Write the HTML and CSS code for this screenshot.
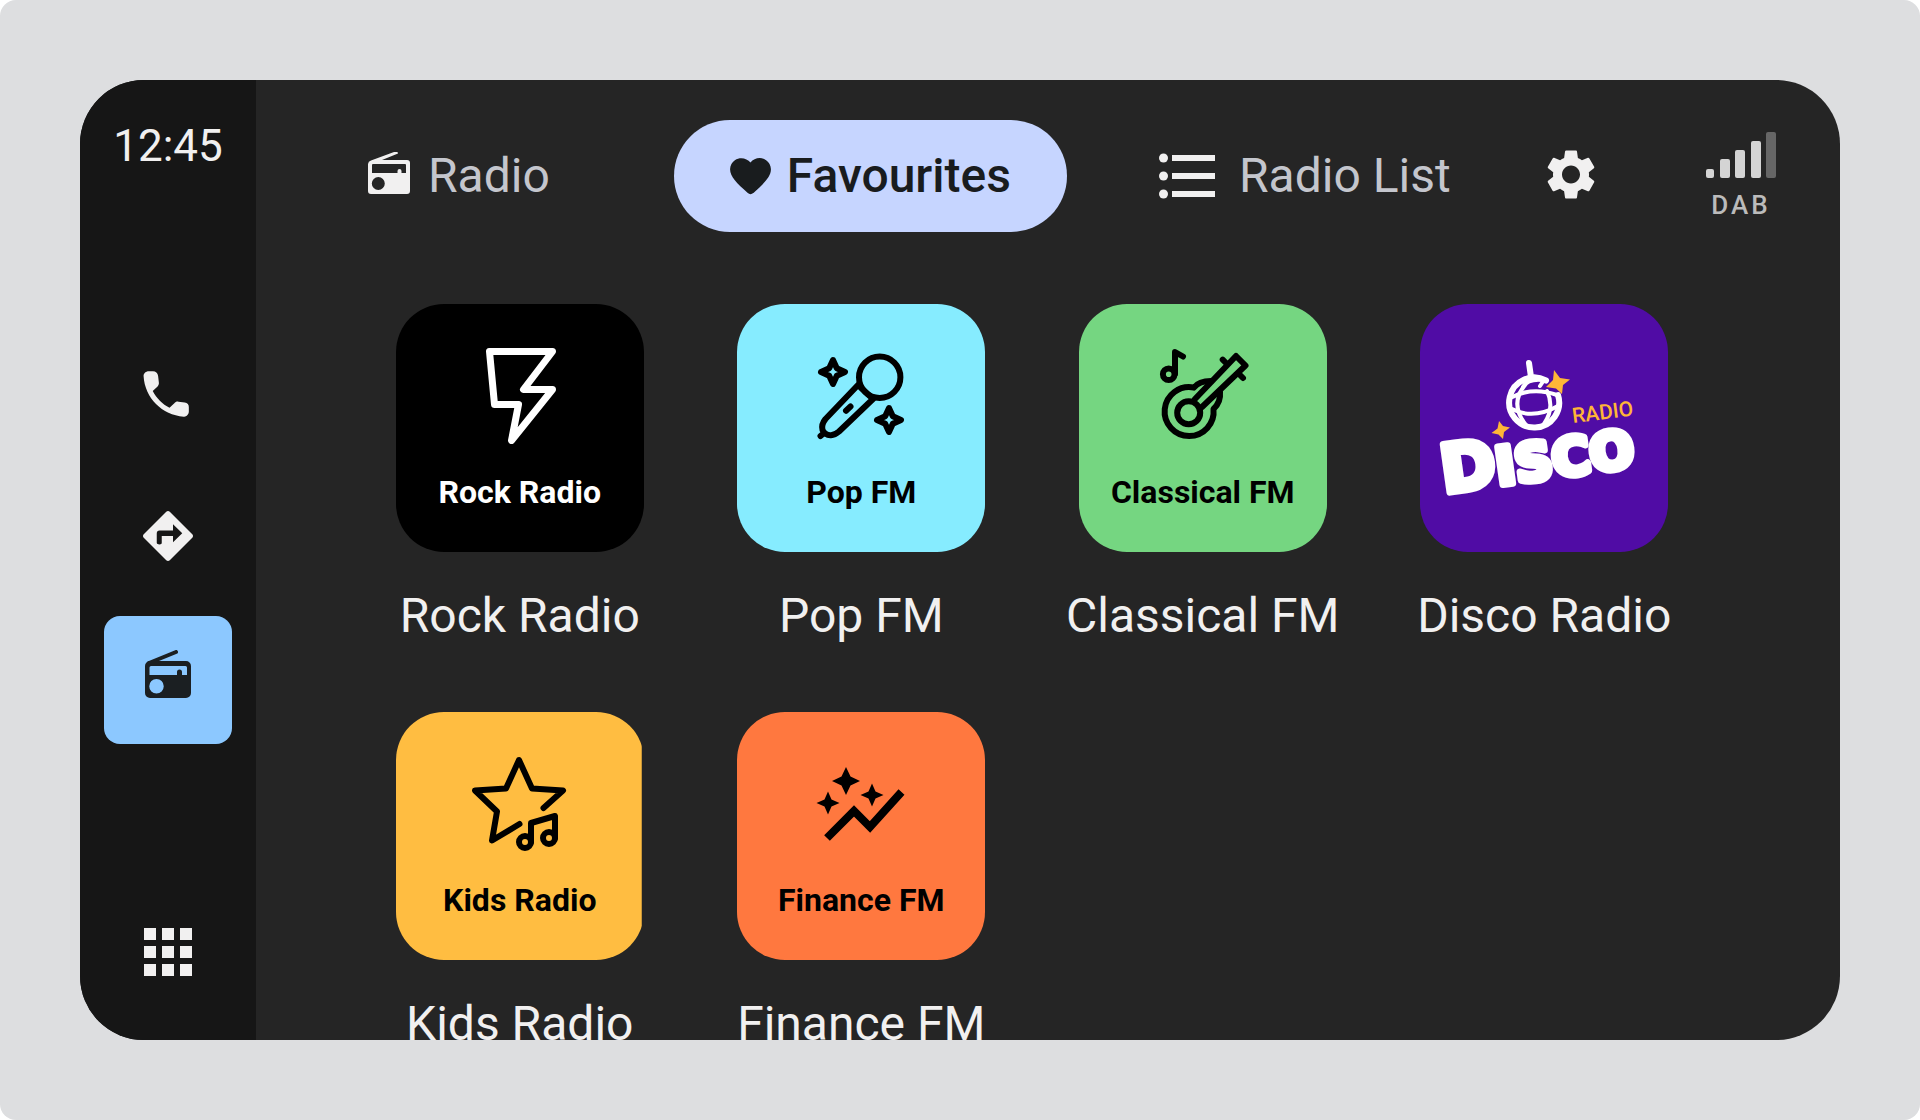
FILE: index.html
```html
<!DOCTYPE html>
<html lang="en">
<head>
  <meta charset="UTF-8" />
  <meta name="viewport" content="width=device-width, initial-scale=1.0"/>
  <title>Car Radio</title>
  <link rel="stylesheet" href="styles.css">
</head>
<body>

  <div class="screen">

    <aside class="sidebar">
      <time class="clock">12:45</time>
      <nav class="apps">
        <button class="app" aria-label="Phone">
          <svg width="61" height="61" viewBox="0.8 -0.6 24 24" fill="currentColor"><path d="M19.2 15.3l-2.5-.3c-.6-.1-1.2.1-1.6.6l-1.9 1.8c-2.8-1.4-5.1-3.7-6.6-6.6l1.9-1.8c.4-.4.6-1 .5-1.6L8.7 4.8C8.600 3.800 7.700 3 6.700 3H5C3.900 3 2.900 3.900 3 5c.5 8.500 7.300 15.300 15.800 15.900 1.100.1 2-.9 2-2v-1.700c.1-1-.6-1.800-1.600-1.900z"/></svg>
        </button>
        <button class="app" aria-label="Navigation">
          <svg width="60" height="60" viewBox="0 0 24 24" fill="currentColor"><path d="M21.710 11.290l-9-9c-.39-.39-1.020-.39-1.410 0l-9 9c-.39.39-.39 1.020 0 1.410l9 9c.39.39 1.020.39 1.410 0l9-9c.39-.38.39-1.010 0-1.410zM14 14.500V12H9.500v2.700c0 .41-.3.700-.9.700-.6 0-1.100-.3-1.100-.700V11c0-.7.4-1.200 1.100-1.200H14V7.300l3.700 3.600-3.700 3.600z"/></svg>
        </button>
        <button class="app app-active" aria-label="Radio">
          <svg width="46" height="60" viewBox="0 0 46 60">
            <path d="M4 13L31 2" stroke="currentColor" stroke-width="4" stroke-linecap="round"/>
            <path fill="currentColor" fill-rule="evenodd" d="M5 11H41a5 5 0 0 1 5 5V43a5 5 0 0 1-5 5H5a5 5 0 0 1-5-5V16a5 5 0 0 1 5-5zM6 16a1.500 1.500 0 0 0-1.500 1.500V25H32V22a2.500 2.500 0 0 1 5 0V25H42V17.500A1.500 1.500 0 0 0 40.500 16zM11.500 29a7 7 0 1 0 0 14.500a7 7 0 1 0 0-14.500z"/>
          </svg>
        </button>
      </nav>
      <button class="app app-grid" aria-label="All apps">
        <svg width="48" height="48" viewBox="0 0 48 48" fill="currentColor"><path d="M0 0h12v12H0zM18 0h12v12H18zM36 0h12v12H36zM0 18h12v12H0zM18 18h12v12H18zM36 18h12v12H36zM0 36h12v12H0zM18 36h12v12H18zM36 36h12v12H36z"/></svg>
      </button>
    </aside>

    <main class="content">
      <header class="topbar">
        <nav class="tabs">
          <button class="tab tab-radio">
            <svg width="42" height="48" viewBox="0 0 42 48" fill="currentColor"><path fill-rule="evenodd" d="M3 8.500L26 0H29.500L30 1.500 14 8H39a3 3 0 0 1 3 3V39a3 3 0 0 1-3 3H3a3 3 0 0 1-3-3V12a4 4 0 0 1 3-3.500zM5 12a1 1 0 0 0-1 1V21H29.500V19a2 2 0 0 1 4 0V21H38V13a1 1 0 0 0-1-1zM10.300 25a6.500 6.500 0 1 0 0 13a6.500 6.500 0 1 0 0-13z"/></svg>
            <span>Radio</span>
          </button>
          <button class="tab tab-active">
            <svg width="49" height="49" viewBox="0 0 24 24" fill="currentColor"><path d="M13.350 20.130c-.76.690-1.930.690-2.690-.01l-.11-.1C5.300 15.270 1.870 12.160 2 8.280c.06-1.700.93-3.330 2.340-4.290 2.640-1.800 5.900-.96 7.660 1.100 1.760-2.060 5.020-2.910 7.660-1.100 1.410.96 2.280 2.590 2.340 4.290.14 3.880-3.300 6.990-8.550 11.760l-.1.090z"/></svg>
            <span>Favourites</span>
          </button>
          <button class="tab tab-list">
            <svg width="56" height="46" viewBox="0 0 56 46" fill="currentColor">
              <circle cx="4.500" cy="5" r="4.500"/><circle cx="4.500" cy="23" r="4.500"/><circle cx="4.500" cy="41" r="4.500"/>
              <path d="M13 2h43v6H13zM13 20h43v6H13zM13 38h43v6H13z"/>
            </svg>
            <span>Radio List</span>
          </button>
        </nav>
        <button class="settings" aria-label="Settings">
          <svg width="60" height="60" viewBox="0 0.6 24 24" fill="currentColor"><path d="M19.140 12.940c.04-.3.06-.61.06-.94 0-.32-.02-.64-.07-.94l2.030-1.580c.18-.14.23-.41.12-.61l-1.920-3.320c-.12-.22-.37-.29-.59-.22l-2.390.96c-.5-.38-1.030-.7-1.620-.94l-.36-2.540c-.04-.24-.24-.41-.48-.41h-3.840c-.24 0-.43.17-.47.41l-.36 2.540c-.59.24-1.130.57-1.620.94l-2.390-.96c-.22-.08-.47 0-.59.22L2.740 8.870c-.12.21-.08.47.12.61l2.030 1.580c-.05.3-.09.63-.09.94s.02.64.07.94l-2.030 1.580c-.18.14-.23.41-.12.610l1.920 3.320c.12.22.37.29.59.22l2.390-.96c.5.38 1.030.7 1.620.94l.36 2.540c.05.24.24.41.48.41h3.840c.24 0 .44-.17.47-.41l.36-2.540c.59-.24 1.130-.56 1.620-.94l2.390.96c.22.08.47 0 .59-.22l1.920-3.320c.12-.22.07-.47-.12-.61l-2.010-1.580zM12 15.600c-1.980 0-3.600-1.620-3.600-3.600s1.620-3.600 3.600-3.600 3.600 1.620 3.600 3.600-1.620 3.600-3.600 3.600z"/></svg>
        </button>
        <div class="signal">
          <svg width="70" height="46" viewBox="0 0 70 46" fill="currentColor">
            <rect y="37" width="8" height="9" rx="2"/>
            <rect x="14" y="27" width="10" height="19" rx="2"/>
            <rect x="29" y="18" width="10" height="28" rx="2"/>
            <rect x="45" y="9" width="10" height="37" rx="2"/>
            <rect class="bar-off" x="60" y="0" width="10" height="46" rx="2"/>
          </svg>
          <span>DAB</span>
        </div>
      </header>

      <section class="stations">
        <button class="station">
          <span class="tile rock">
            <svg class="tile-icon" viewBox="0 0 96 96">
              <path d="M17.500 3.500H80.500L51.500 41.500H80.500L39.500 92.500 46.500 56.500H22.500z"/>
            </svg>
            <span>Rock Radio</span>
          </span>
          <span class="name">Rock Radio</span>
        </button>

        <button class="station">
          <span class="tile pop">
            <svg class="tile-icon" viewBox="0 0 96 96">
              <circle cx="66.700" cy="29.300" r="20.700"/>
              <path d="M45 37L12.500 71Q8 76.500 9.500 82 12 87.500 18 87.200 22 87 26 83.500L60 51zM11 85L7.500 88M33 62.700L37.500 58.500"/>
              <path d="M20 12L23.800 20.200 32 24 23.800 27.800 20 36 16.200 27.800 8 24 16.200 20.200z"/>
              <path d="M76 60L79.800 68.200 88 72 79.800 75.800 76 84 72.200 75.800 64 72 72.200 68.200z"/>
            </svg>
            <span>Pop FM</span>
          </span>
          <span class="name">Pop FM</span>
        </button>

        <button class="station">
          <span class="tile classical">
            <svg class="tile-icon" viewBox="0 0 96 96">
              <circle cx="13.700" cy="26.300" r="5.800"/>
              <path d="M20 26V4L28 8.500"/>
              <path d="M39 39.500A24.500 24.500 0 1 0 58.500 61Q66 54 65 44M39 39.500Q44 33 56 33"/>
              <circle cx="33.700" cy="64.700" r="11.500"/>
              <path d="M40 51L81 8 90.500 17.500 47 59M67.700 11.700L72 16M84 26L88 30"/>
            </svg>
            <span>Classical FM</span>
          </span>
          <span class="name">Classical FM</span>
        </button>

        <button class="station">
          <span class="tile disco">
            <svg class="disco-logo" viewBox="0 0 248 248">
              <g class="disco-ball">
                <path d="M109 59L111 73" stroke-width="6"/>
                <path d="M126 76.500A25 25 0 1 0 138 91" stroke-width="6"/>
                <path d="M90 94Q112 82 137 91M92 105Q113 116 138 102"/>
                <path d="M112 74Q86 96 106 121M127 87Q135 104 124 120M103 83Q108 74 124 76L120 82"/>
              </g>
              <g class="disco-star">
                <path d="M134 66L140 74 150 75.500 143 81 142 90 136 84.500 126 83 133 76z"/>
                <path d="M79 117L83 122 90 123.500 84 128 83 135 78.500 130.500 71.500 129 77.500 124.500z"/>
              </g>
              <text class="disco-word" x="24" y="189" transform="rotate(-8 24 189)"><tspan class="disco-cap">D</tspan>ISCO</text>
              <text class="disco-sub" x="153" y="119" transform="rotate(-7 153 119)">RADIO</text>
            </svg>
          </span>
          <span class="name">Disco Radio</span>
        </button>

        <button class="station">
          <span class="tile kids">
            <svg class="tile-icon" viewBox="0 0 96 96">
              <path d="M71.500 52L91 34.500 60 32.500 47 4 34 32.500 3 34.500 25 55.500 20 84.500 47.500 68"/>
              <circle cx="53" cy="86" r="6"/>
              <circle cx="77" cy="82" r="6"/>
              <path d="M59 86V67L83 60V82"/>
            </svg>
            <span>Kids Radio</span>
          </span>
          <span class="name">Kids Radio</span>
        </button>

        <button class="station">
          <span class="tile finance">
            <svg class="tile-icon" viewBox="0 0 96 96">
              <path class="chart-line" d="M14 82L41 55 57 71 88.500 36"/>
              <path class="chart-star" d="M33 11L37.500 20.500 47 25 37.500 29.500 33 39 28.500 29.500 19 25 28.500 20.500z"/>
              <path class="chart-star" d="M59 27.500L62.500 35.500 70.500 39 62.500 42.500 59 50.500 55.500 42.500 47.500 39 55.500 35.500z"/>
              <path class="chart-star" d="M15 35.500L18.500 43.500 26.500 47 18.500 50.500 15 58.500 11.500 50.500 3.500 47 11.500 43.500z"/>
            </svg>
            <span>Finance FM</span>
          </span>
          <span class="name">Finance FM</span>
        </button>
      </section>
    </main>

  </div>

</body>
</html>
```

FILE: styles.css
```css
* {
  box-sizing: border-box;
}
html {
  background: #fff;
}
body {
  font-family: Roboto, sans-serif;
  background: #dddee0;
  margin: 0;
  padding: 80px;
  height: 100vh;
  border-radius: 16px;
}
button {
  padding: 0;
  border: none;
  background: none;
  color: inherit;
  font: inherit;
  cursor: pointer;
}
svg {
  display: block;
  flex-shrink: 0;
}
.screen {
  display: flex;
  height: 100%;
  background: #252525;
  color: #f1f0f0;
  border-radius: 64px;
  overflow: hidden;
}

/* sidebar */
.sidebar {
  display: flex;
  flex-direction: column;
  align-items: center;
  flex: 0 0 176px;
  padding: 40px 0 24px;
  background: #161616;
}
.clock {
  font-size: 44px;
  line-height: 52px;
}
.apps {
  display: flex;
  flex-direction: column;
  gap: 16px;
  margin-top: 156px;
}
.app {
  display: flex;
  align-items: center;
  justify-content: center;
  width: 128px;
  height: 128px;
  border-radius: 16px;
}
.app-active {
  background: #8cc8ff;
  color: #1b1f22;
}
.app-grid {
  margin-top: auto;
}

/* top bar */
.content {
  flex: 1;
  min-width: 0;
}
.topbar {
  display: flex;
  align-items: center;
  padding: 40px 64px 0 112px;
}
.tabs {
  display: flex;
  align-items: center;
}
.tab {
  display: flex;
  align-items: center;
  gap: 18px;
  height: 112px;
  font-size: 48px;
  line-height: 56px;
  white-space: nowrap;
}
.tab span {
  color: #c4c6cd;
}
.tab-active {
  gap: 12px;
  margin: 0 92px 0 124px;
  padding: 0 56px 0 52px;
  border-radius: 56px;
  background: #c6d5ff;
  color: #191c1e;
  font-weight: 500;
}
.tab-active span {
  color: inherit;
}
.tab-list {
  gap: 24px;
}
.settings {
  margin-left: 90px;
}
.signal {
  display: flex;
  flex-direction: column;
  align-items: center;
  gap: 12px;
  margin-left: auto;
  color: #d4d4d4;
  font-size: 26px;
  font-weight: 500;
  line-height: 30px;
  letter-spacing: 3px;
}
.signal span {
  color: #bbb;
}
.bar-off {
  fill: #666;
}

/* stations */
.stations {
  display: grid;
  grid-template-columns: repeat(4, 1fr);
  row-gap: 68px;
  padding: 72px 125px 0 93px;
}
.station {
  display: flex;
  flex-direction: column;
  align-items: center;
  gap: 36px;
}
.tile {
  display: flex;
  flex-direction: column;
  align-items: center;
  gap: 28px;
  width: 248px;
  height: 248px;
  padding-top: 44px;
  border-radius: 48px;
  color: #000;
  font-size: 32px;
  font-weight: 700;
  line-height: 40px;
}
.name {
  font-size: 48px;
  line-height: 56px;
  white-space: nowrap;
}
.tile-icon {
  width: 96px;
  height: 96px;
  fill: none;
  stroke: currentColor;
  stroke-width: 6px;
  stroke-linecap: round;
  stroke-linejoin: round;
}
.rock {
  background: #000;
  color: #fff;
}
.rock .tile-icon {
  stroke-width: 7px;
}
.pop {
  background: #86ecff;
}
.classical {
  background: #75d681;
}
.kids {
  background: #ffbd41;
  clip-path: inset(0 2px 0 0);
}
.finance {
  background: #ff783f;
}
.chart-line {
  stroke-width: 8px;
  stroke-linecap: butt;
  stroke-linejoin: miter;
}
.chart-star {
  fill: currentColor;
  stroke: none;
}

/* disco logo */
.disco {
  padding: 0;
  background: #500ca5;
}
.disco-logo {
  width: 248px;
  height: 248px;
}
.disco-ball {
  fill: none;
  stroke: #fff;
  stroke-width: 4px;
  stroke-linecap: round;
  stroke-linejoin: round;
}
.disco-star {
  fill: #ffb637;
}
.disco-word {
  font-family: "DejaVu Sans", sans-serif;
  font-size: 52px;
  font-weight: 700;
  fill: #fff;
  stroke: #fff;
  stroke-width: 7px;
  stroke-linejoin: round;
}
.disco-cap {
  font-size: 66px;
}
.disco-sub {
  font-family: Roboto, sans-serif;
  font-size: 21px;
  font-weight: 500;
  fill: #ffb637;
}
```
